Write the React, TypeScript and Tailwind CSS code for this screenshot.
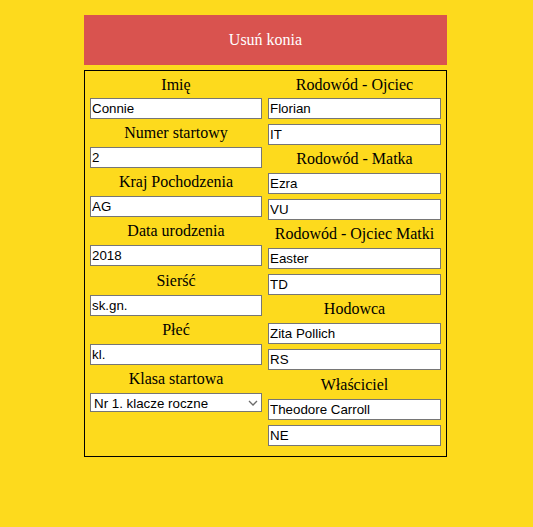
import React from "react";

const serif = "font-['Liberation_Serif',serif]";

const Label = ({ text, first }: { text: string; first?: boolean }) => (
  <div
    className={`${first ? "h-[27px]" : "h-[28.17px]"} flex items-center justify-center text-[16px] text-black ${serif}`}
  >
    {text}
  </div>
);

const Field = ({ value, className = "" }: { value: string; className?: string }) => (
  <input
    type="text"
    defaultValue={value}
    className={`block w-full h-[21px] border border-[#767676] bg-white px-[1px] text-[13.33px] text-black font-['Liberation_Sans',Arial,sans-serif] outline-none ${className}`}
  />
);

export default function App() {
  return (
    <div className="min-h-screen bg-[#fdda1d] pt-[15px]">
      <div className="w-[363px] ml-[84px]">
        <div
          className={`h-[50px] bg-[#d9534f] flex items-center justify-center text-white text-[16px] ${serif}`}
        >
          Usuń konia
        </div>

        <div className="mt-[5px] border border-black flex gap-[6px] px-[5px] pb-[10px]">
          {/* lewa kolumna */}
          <div className="w-[172px] flex flex-col">
            <Label text="Imię" first />
            <Field value="Connie" />
            <Label text="Numer startowy" />
            <Field value="2" />
            <Label text="Kraj Pochodzenia" />
            <Field value="AG" />
            <Label text="Data urodzenia" />
            <Field value="2018" />
            <Label text="Sierść" />
            <Field value="sk.gn." />
            <Label text="Płeć" />
            <Field value="kl." />
            <Label text="Klasa startowa" />
            <div className="relative">
              <select
                defaultValue="1"
                className="block w-full h-[19px] appearance-none border border-[#767676] bg-white pl-[3px] text-[13.33px] text-black font-['Liberation_Sans',Arial,sans-serif] outline-none"
              >
                <option value="1">Nr 1. klacze roczne</option>
                <option value="2">Nr 2. ogiery roczne</option>
              </select>
              <svg
                className="absolute right-[4px] top-[7px] pointer-events-none"
                width="10"
                height="6"
                viewBox="0 0 10 6"
              >
                <path d="M1 1 L5 5 L9 1" fill="none" stroke="#6b6b6b" strokeWidth="1.3" />
              </svg>
            </div>
          </div>

          {/* prawa kolumna */}
          <div className="w-[173px] flex flex-col">
            <Label text="Rodowód - Ojciec" first />
            <Field value="Florian" />
            <Field value="IT" className="mt-[5px]" />
            <Label text="Rodowód - Matka" />
            <Field value="Ezra" />
            <Field value="VU" className="mt-[5px]" />
            <Label text="Rodowód - Ojciec Matki" />
            <Field value="Easter" />
            <Field value="TD" className="mt-[5px]" />
            <Label text="Hodowca" />
            <Field value="Zita Pollich" />
            <Field value="RS" className="mt-[5px]" />
            <Label text="Właściciel" />
            <Field value="Theodore Carroll" />
            <Field value="NE" className="mt-[5px]" />
          </div>
        </div>
      </div>
    </div>
  );
}
